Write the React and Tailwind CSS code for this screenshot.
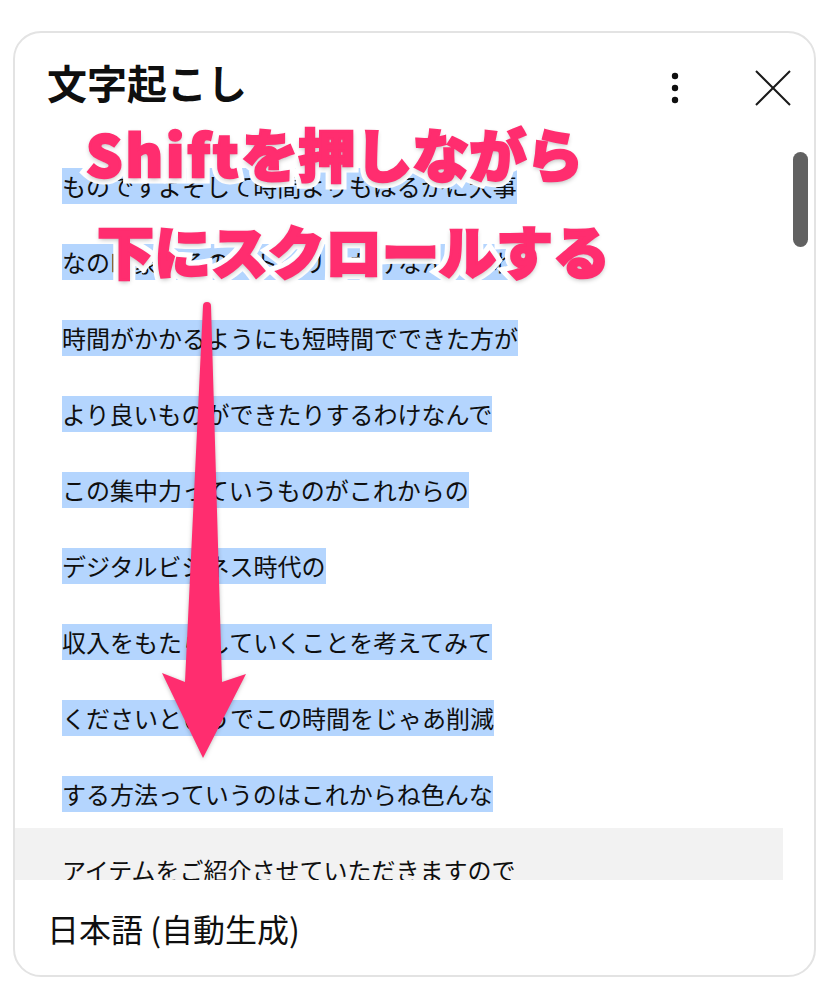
const lines = [
  'ものですよそして時間よりもはるかに大事',
  'なの印象はそのストーリーだけなんですね',
  '時間がかかるようにも短時間でできた方が',
  'より良いものができたりするわけなんで',
  'この集中力っていうものがこれからの',
  'デジタルビジネス時代の',
  '収入をもたらしていくことを考えてみて',
  'くださいというでこの時間をじゃあ削減',
  'する方法っていうのはこれからね色んな',
];

function Kebab() {
  return (
    <svg width="24" height="36" viewBox="0 0 24 36">
      <circle cx="12" cy="6" r="3.2" fill="#0f0f0f" />
      <circle cx="12" cy="18" r="3.2" fill="#0f0f0f" />
      <circle cx="12" cy="30" r="3.2" fill="#0f0f0f" />
    </svg>
  );
}

function Close() {
  return (
    <svg width="36" height="36" viewBox="0 0 36 36">
      <path d="M1 1 L35 35 M35 1 L1 35" stroke="#1a1a1a" strokeWidth="2" fill="none" />
    </svg>
  );
}

function Arrow() {
  return (
    <svg
      className="absolute left-[135px] top-[262px] drop-shadow-[0_1px_2px_rgba(0,0,0,0.25)]"
      width="110"
      height="470"
      viewBox="0 0 110 470"
    >
      <path
        d="M53 11 A4 4 0 0 1 61 11 L72 387 L96 379 L53 463 L12 378 L35 387 Z"
        fill="#ff2d6f"
      />
    </svg>
  );
}

// two layers: white outline underneath, pink stroked copy on top to thicken
function Pop({ className, children }) {
  const base = "whitespace-nowrap text-[57px] leading-[57px] font-black";
  return (
    <div className={`absolute ${className}`}>
      <div className={`${base} text-[#ff2d6f] [-webkit-text-stroke:13px_white] [paint-order:stroke_fill] [text-shadow:0_2px_5px_rgba(0,0,0,0.3)]`}>
        {children}
      </div>
      <div className={`${base} absolute inset-0 text-[#ff2d6f] [-webkit-text-stroke:2.5px_#ff2d6f]`}>
        {children}
      </div>
    </div>
  );
}

export default function App() {
  return (
    <div className="min-h-screen bg-white pt-[31px] pl-[13px] font-['Noto_Sans_CJK_JP',sans-serif] text-[#0f0f0f]">
      <div className="relative w-[803px] h-[946px] border-2 border-[#e3e3e3] rounded-[28px] flex flex-col overflow-hidden">
        <div className="h-[111px] flex items-start pl-[32px] pr-[23px] shrink-0">
          <h1 className="mt-[29px] text-[40px] leading-none font-bold">文字起こし</h1>
          <div className="ml-auto mt-[37px] flex items-center gap-[68px]">
            <Kebab />
            <Close />
          </div>
        </div>

        <div className="flex h-[736px] shrink-0">
          <div className="w-[768px] overflow-hidden">
            {lines.map((t) => (
              <div key={t} className="h-[76px] pt-[24px] pl-[47px]">
                <span className="bg-[#b4d5fe] text-[24px] leading-[36px] inline-block">{t}</span>
              </div>
            ))}
            <div className="h-[76px] pt-[24px] pl-[47px] bg-[#f2f2f2]">
              <span className="text-[24px] leading-[36px] inline-block">アイテムをご紹介させていただきますので</span>
            </div>
          </div>
          <div className="flex-1 pl-[10px] pt-[8px]">
            <div className="w-[15px] h-[95px] rounded-full bg-[#616161]" />
          </div>
        </div>

        <div className="flex-1 flex items-center pl-[32px]">
          <span className="text-[32px] leading-none">日本語 (自動生成)</span>
        </div>

        <Pop className="left-[71px] top-[91px]">
          <span className="tracking-[3px]">Shift</span>を押しながら
        </Pop>
        <Pop className="left-[82px] top-[188px]">下にスクロールする</Pop>
        <Arrow />
      </div>
    </div>
  );
}
